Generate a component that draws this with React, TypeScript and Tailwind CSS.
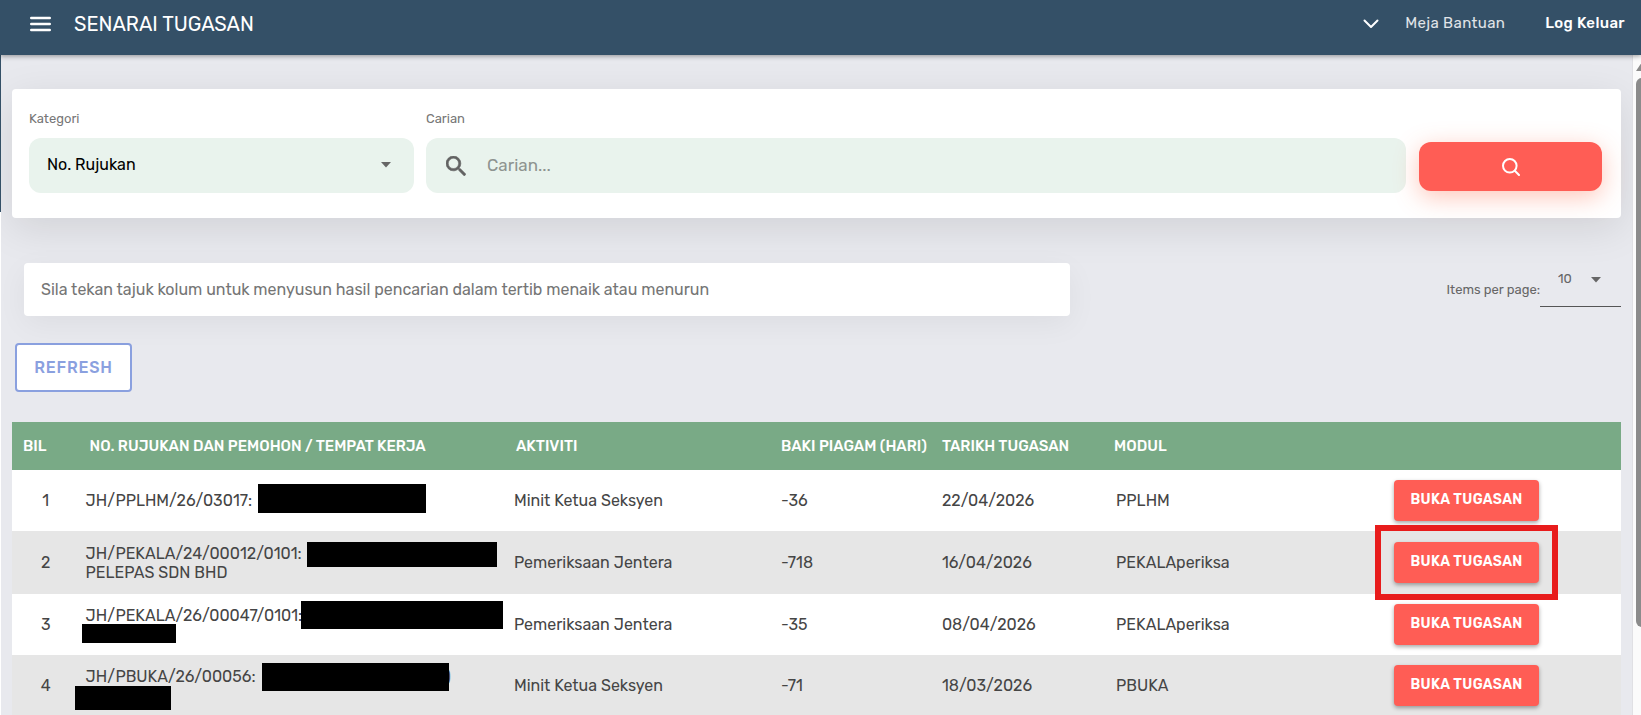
import { useState } from "react";
import clsx from "clsx";

interface Task {
  bil: number;
  ref: string;
  company?: string;
  masks: string[];
  tail?: string;
  aktiviti: string;
  baki: number;
  tarikh: string;
  modul: string;
  highlighted?: boolean;
}

// masks: private details in the reference column are covered with solid bars
const TASKS: Task[] = [
  {
    bil: 1,
    ref: "JH/PPLHM/26/03017:",
    masks: ["left-[178px] top-[14px] w-[168px] h-[29px]"],
    aktiviti: "Minit Ketua Seksyen",
    baki: -36,
    tarikh: "22/04/2026",
    modul: "PPLHM",
  },
  {
    bil: 2,
    ref: "JH/PEKALA/24/00012/0101:",
    company: "PELEPAS SDN BHD",
    masks: ["left-[227px] top-[11px] w-[190px] h-[25px]"],
    aktiviti: "Pemeriksaan Jentera",
    baki: -718,
    tarikh: "16/04/2026",
    modul: "PEKALAperiksa",
    highlighted: true,
  },
  {
    bil: 3,
    ref: "JH/PEKALA/26/00047/0101:",
    company: "\u00a0",
    masks: [
      "left-[221px] top-[7px] w-[202px] h-[28px]",
      "left-[2px] top-[30px] w-[94px] h-[19px]",
    ],
    aktiviti: "Pemeriksaan Jentera",
    baki: -35,
    tarikh: "08/04/2026",
    modul: "PEKALAperiksa",
  },
  {
    bil: 4,
    ref: "JH/PBUKA/26/00056:",
    company: "\u00a0",
    masks: [
      "left-[182px] top-[8px] w-[187px] h-[28px]",
      "left-[-5px] top-[31px] w-[96px] h-[24px]",
    ],
    tail: ")",
    aktiviti: "Minit Ketua Seksyen",
    baki: -71,
    tarikh: "18/03/2026",
    modul: "PBUKA",
  },
];

export default function App() {
  const [kategori, setKategori] = useState("No. Rujukan");
  const [carian, setCarian] = useState("");
  const [perPage, setPerPage] = useState("10");

  return (
    <div className="h-screen flex flex-col overflow-hidden bg-white font-['Rubik','Roboto',sans-serif] text-base text-[#454545]">
      {/* Top bar */}
      <header className="relative z-10 shrink-0 h-[55px] pb-2 pl-[30px] pr-4 flex items-center bg-[#345067] text-white shadow-[0_1px_5px_rgba(0,0,0,0.4)]">
        <button type="button" aria-label="Menu" className="mr-[23px]">
          <svg width="21" height="16" viewBox="0 0 21 16" fill="none" stroke="currentColor" strokeWidth="2.4" strokeLinecap="round">
            <path d="M1.2 2h18.6M1.2 8h18.6M1.2 14h18.6" />
          </svg>
        </button>
        <h1 className="text-xl font-normal">SENARAI TUGASAN</h1>
        <nav className="ml-auto flex items-center text-[15px] tracking-wide">
          <button type="button" aria-label="Profil" className="mr-[26px]">
            <svg width="16" height="10" viewBox="0 0 16 10" fill="none" stroke="currentColor" strokeWidth="2" strokeLinecap="round" strokeLinejoin="round">
              <path d="M1.5 1.5 8 8l6.5-6.5" />
            </svg>
          </button>
          <a href="#bantuan" className="mr-10 text-white/85">Meja Bantuan</a>
          <a href="#keluar" className="font-medium">Log Keluar</a>
        </nav>
      </header>

      <div className="flex-1 min-h-0 flex">
        {/* Edge of the collapsed side menu */}
        <div className="w-px shrink-0">
          <div className="h-[157px] bg-[#345067]" />
        </div>

        <main className="flex-1 min-w-0 overflow-hidden bg-[#e8e9ee] pl-[11px] pr-[11px] pt-[34px]">
          {/* Search */}
          <form
            onSubmit={(e) => e.preventDefault()}
            className="h-[129px] flex items-start rounded bg-white pl-[17px] pr-[19px] pt-5 shadow-[0_10px_40px_rgba(0,0,0,0.1)]"
          >
            <div className="w-[385px] mr-3">
              <label htmlFor="kategori" className="block h-[29px] text-[13px] leading-5 text-[#777]">Kategori</label>
              <div className="relative">
                <select
                  id="kategori"
                  value={kategori}
                  onChange={(e) => setKategori(e.target.value)}
                  className="w-full h-[55px] pl-[18px] pb-0.5 appearance-none rounded-xl bg-[#e9f3ed] text-base text-black focus:outline-none"
                >
                  <option>No. Rujukan</option>
                  <option>Nama Pemohon</option>
                  <option>Tempat Kerja</option>
                </select>
                <Caret className="right-[23px] top-6" />
              </div>
            </div>
            <div className="flex-1 mr-[13px]">
              <label htmlFor="carian" className="block h-[29px] text-[13px] leading-5 text-[#777]">Carian</label>
              <div className="h-[55px] flex items-center rounded-xl bg-[#e9f3ed] pl-5">
                <svg width="20" height="20" viewBox="3 3 17.5 17.5" fill="#626262" stroke="#626262" strokeWidth="0.5" className="shrink-0 mr-[21px]">
                  <path d="M15.5 14h-.79l-.28-.27A6.471 6.471 0 0 0 16 9.5 6.5 6.5 0 1 0 9.5 16c1.61 0 3.09-.59 4.23-1.57l.27.28v.79l5 4.99L20.49 19l-4.99-5zm-6 0C7.01 14 5 11.99 5 9.5S7.01 5 9.5 5 14 7.01 14 9.5 11.99 14 9.5 14z" />
                </svg>
                <input
                  id="carian"
                  value={carian}
                  onChange={(e) => setCarian(e.target.value)}
                  placeholder="Carian..."
                  className="flex-1 bg-transparent text-[17px] placeholder-[#8e9390] focus:outline-none"
                />
              </div>
            </div>
            <button
              type="submit"
              aria-label="Cari"
              className="mt-[33px] w-[183px] h-[49px] flex items-center justify-center rounded-xl bg-[#ff5d55] text-white shadow-[0_6px_24px_rgba(255,93,55,0.35)]"
            >
              <svg width="18" height="18" viewBox="0 0 18 18" fill="none" stroke="currentColor" strokeWidth="2" strokeLinecap="round">
                <circle cx="7.8" cy="7.8" r="6.8" />
                <path d="m12.8 12.8 4.2 4.2" />
              </svg>
            </button>
          </form>

          {/* Hint and page size */}
          <div className="mt-[45px] flex items-start justify-between">
            <p className="ml-3 w-[65%] h-[53px] pl-[17px] flex items-center rounded bg-white text-[#757575] shadow-[0_8px_30px_rgba(0,0,0,0.05)]">
              Sila tekan tajuk kolum untuk menyusun hasil pencarian dalam tertib menaik atau menurun
            </p>
            <div className="flex items-center text-[13px] text-[#666]">
              <label htmlFor="per-page" className="pt-[10px]">Items per page:</label>
              <div className="relative">
                <select
                  id="per-page"
                  value={perPage}
                  onChange={(e) => setPerPage(e.target.value)}
                  className="w-[81px] h-[44px] pl-[18px] pb-[11px] appearance-none border-b border-[#555] bg-transparent focus:outline-none"
                >
                  <option>10</option>
                  <option>20</option>
                  <option>50</option>
                </select>
                <Caret className="right-5 top-[14px]" />
              </div>
            </div>
          </div>

          <button
            type="button"
            className="mt-[27px] ml-[3px] w-[117px] h-[49px] block rounded border-2 border-[#8aa0df] bg-white text-base font-medium tracking-wider text-[#8aa0df]"
          >
            REFRESH
          </button>

          {/* Tasks */}
          <table className="mt-[30px] w-full table-fixed text-left">
            <colgroup>
              <col className="w-[4.2%]" />
              <col className="w-[26.5%]" />
              <col className="w-[16.6%]" />
              <col className="w-[10%]" />
              <col className="w-[10.7%]" />
              <col className="w-[17.4%]" />
              <col />
            </colgroup>
            <thead>
              <tr className="h-12 bg-[#79aa86] text-[15px] whitespace-nowrap text-white">
                <th className="pl-[11px] font-medium">BIL</th>
                <th className="pl-[10px] font-medium">NO. RUJUKAN DAN PEMOHON / TEMPAT KERJA</th>
                <th className="pl-[10px] font-medium">AKTIVITI</th>
                <th className="pl-2 font-medium">BAKI PIAGAM (HARI)</th>
                <th className="pl-2 font-medium">TARIKH TUGASAN</th>
                <th className="pl-2 font-medium">MODUL</th>
                <th />
              </tr>
            </thead>
            <tbody>
              {TASKS.map((task) => (
                <TaskRow key={task.bil} task={task} />
              ))}
            </tbody>
          </table>
        </main>

        {/* Scrollbar */}
        <div className="w-[9px] shrink-0 overflow-hidden border-l border-[#e0e0e4] bg-[#fbfbfb] pl-[3px] pt-[7px]">
          <svg width="12" height="9" viewBox="0 0 12 9" fill="#8b8b8b">
            <path d="M6 0 12 9H0z" />
          </svg>
          <div className="mt-[7px] w-3 h-[549px] rounded-md bg-[#8b8b8b]" />
        </div>
      </div>
    </div>
  );
}

function TaskRow({ task }: { task: Task }) {
  return (
    <tr className={clsx("odd:bg-white even:bg-[#e6e6e6]", task.highlighted ? "h-[63px]" : "h-[61px]")}>
      <td className="text-center">{task.bil}</td>
      <td className="relative pl-[6px] leading-[19px]">
        <div>{task.ref}</div>
        {task.company && <div>{task.company}</div>}
        {task.tail && <span className="absolute left-[366px] top-3">{task.tail}</span>}
        {task.masks.map((mask) => (
          <span key={mask} className={clsx("absolute bg-black", mask)} />
        ))}
      </td>
      <td className="pl-2">{task.aktiviti}</td>
      <td className="pl-2">{task.baki}</td>
      <td className="pl-2">{task.tarikh}</td>
      <td className="pl-[10px]">{task.modul}</td>
      <td className="pl-2">
        <div className="relative w-[145px]">
          <button
            type="button"
            className="w-full h-[41px] block rounded bg-[#ff5d55] pb-0.5 text-sm font-semibold tracking-wide text-white shadow-[0_2px_4px_rgba(0,0,0,0.35)]"
          >
            BUKA TUGASAN
          </button>
          {task.highlighted && (
            <div className="absolute -inset-x-[19px] -inset-y-[17px] border-[6px] border-[#e81c1c] pointer-events-none" />
          )}
        </div>
      </td>
    </tr>
  );
}

function Caret({ className }: { className: string }) {
  return (
    <svg width="10" height="6" viewBox="0 0 10 6" fill="#666" className={clsx("absolute pointer-events-none", className)}>
      <path d="M0 0h10L5 5.5z" />
    </svg>
  );
}
